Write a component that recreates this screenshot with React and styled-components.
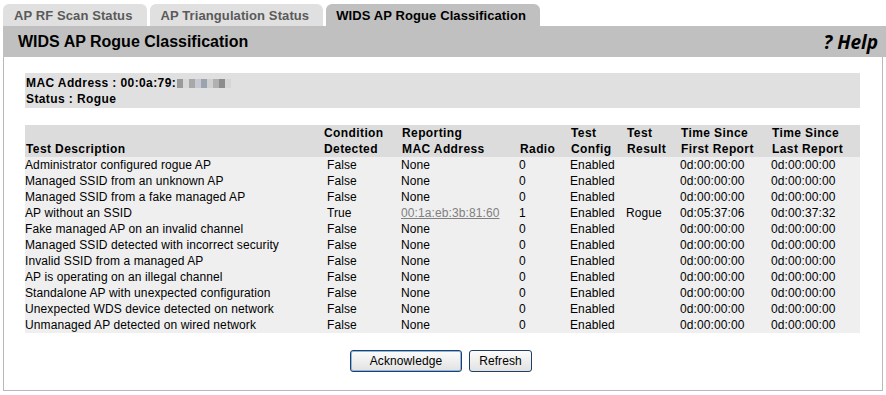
import styled, { createGlobalStyle } from "styled-components";

const GlobalStyle = createGlobalStyle`
  body {
    margin: 0;
    background: #fff;
    font-family: "Liberation Sans", Arial, sans-serif;
    font-size: 12px;
    color: #000;
  }
`;

const Page = styled.div`
  width: 886px;
  height: 395px;
  box-sizing: border-box;
  padding: 4px 0 0 3px;
`;

const TabBar = styled.div`
  display: flex;
  gap: 3px;
  height: 22px;
`;

const Tab = styled.div`
  display: flex;
  align-items: center;
  padding: 0 14px 0 ${(p) => (p.$active ? "10px" : "11px")};
  border-radius: 6px 6px 0 0;
  background: ${(p) => (p.$active ? "#c0c0c0" : "#e0e0e0")};
  color: ${(p) => (p.$active ? "#000" : "#5a5a5a")};
  font-weight: bold;
  font-size: 13px;
  letter-spacing: 0.1px;
`;

const TitleBar = styled.div`
  display: flex;
  justify-content: space-between;
  align-items: center;
  height: 31px;
  background: #c0c0c0;
  padding: 0 8px 0 15px;
`;

const Title = styled.h1`
  margin: 0;
  font-size: 16px;
  font-weight: bold;
`;

const Help = styled.span`
  font-family: "Open Sans", "DejaVu Sans", sans-serif;
  font-style: italic;
  font-weight: bold;
  font-size: 19px;
`;

const Panel = styled.div`
  width: 880px;
  box-sizing: border-box;
  border: 1px solid #b8b8b8;
  border-top: none;
  padding: 16px 22px 18px 21px;
`;

const InfoBox = styled.div`
  background: #e0e0e0;
  padding: 2px 1px 0;
  height: 35px;
  box-sizing: border-box;
  font-weight: bold;
  letter-spacing: 0.4px;
  line-height: 16px;
`;

const Blurred = styled.span`
  display: inline-flex;
  vertical-align: -1px;
  margin-left: 1px;
  span {
    width: 6px;
    height: 9px;
  }
`;

const Table = styled.table`
  margin-top: 17px;
  width: 835px;
  border-collapse: collapse;
  table-layout: fixed;
  td, th {
    padding: 0 0 0 1px;
    text-align: left;
    white-space: nowrap;
    line-height: 16px;
  }
  thead tr {
    background: #dcdcdc;
  }
  thead th {
    vertical-align: bottom;
    line-height: 15.5px;
    height: 32px;
    letter-spacing: 0.4px;
  }
  tbody tr {
    background: #efefef;
  }
  tbody td {
    letter-spacing: 0.1px;
  }
`;

const Cell = styled.td`
  padding-left: ${(p) => (p.$indent ? "4px" : "0")} !important;
`;

const Mac = styled.a`
  color: #808080;
  text-decoration: underline;
`;

const Buttons = styled.div`
  display: flex;
  justify-content: center;
  gap: 7px;
  margin-top: 17px;
  padding-right: 3px;
`;

const Button = styled.button`
  font-family: "Liberation Sans", Arial, sans-serif;
  font-size: 12px;
  letter-spacing: 0.1px;
  height: 22px;
  padding: 0 ${(p) => (p.$wide ? "17px" : "9px")};
  min-width: ${(p) => (p.$wide ? "112px" : "63px")};
  background: linear-gradient(#fbfbfb, #ececec 60%, #e2e2e2);
  border: 1px solid #1f3f66;
  border-radius: 3px;
  box-shadow: ${(p) => (p.$wide ? "inset 0 0 0 1px #8cb6e4" : "none")};
  color: #000;
`;

const rows = [
  ["Administrator configured rogue AP", "False", "None", "0", "Enabled", "", "0d:00:00:00", "0d:00:00:00"],
  ["Managed SSID from an unknown AP", "False", "None", "0", "Enabled", "", "0d:00:00:00", "0d:00:00:00"],
  ["Managed SSID from a fake managed AP", "False", "None", "0", "Enabled", "", "0d:00:00:00", "0d:00:00:00"],
  ["AP without an SSID", "True", "00:1a:eb:3b:81:60", "1", "Enabled", "Rogue", "0d:05:37:06", "0d:00:37:32"],
  ["Fake managed AP on an invalid channel", "False", "None", "0", "Enabled", "", "0d:00:00:00", "0d:00:00:00"],
  ["Managed SSID detected with incorrect security", "False", "None", "0", "Enabled", "", "0d:00:00:00", "0d:00:00:00"],
  ["Invalid SSID from a managed AP", "False", "None", "0", "Enabled", "", "0d:00:00:00", "0d:00:00:00"],
  ["AP is operating on an illegal channel", "False", "None", "0", "Enabled", "", "0d:00:00:00", "0d:00:00:00"],
  ["Standalone AP with unexpected configuration", "False", "None", "0", "Enabled", "", "0d:00:00:00", "0d:00:00:00"],
  ["Unexpected WDS device detected on network", "False", "None", "0", "Enabled", "", "0d:00:00:00", "0d:00:00:00"],
  ["Unmanaged AP detected on wired network", "False", "None", "0", "Enabled", "", "0d:00:00:00", "0d:00:00:00"],
];

const widths = [298, 78, 118, 51, 56, 54, 91, 89];
const blur = ["#9a9a9a", "#d8d8d8", "#a8a8a8", "#c8c8d0", "#9aa4b0", "#d0d0d0", "#b0b0b0", "#8c8c8c", "#d6d6d6"];

export default function App() {
  return (
    <Page>
      <GlobalStyle />
      <TabBar>
        <Tab>AP RF Scan Status</Tab>
        <Tab>AP Triangulation Status</Tab>
        <Tab $active>WIDS AP Rogue Classification</Tab>
      </TabBar>
      <TitleBar>
        <Title>WIDS AP Rogue Classification</Title>
        <Help>? Help</Help>
      </TitleBar>
      <Panel>
        <InfoBox>
          <div>
            MAC Address : 00:0a:79:
            <Blurred>
              {blur.map((c, i) => (
                <span key={i} style={{ background: c }} />
              ))}
            </Blurred>
          </div>
          <div>Status : Rogue</div>
        </InfoBox>
        <Table>
          <colgroup>
            {widths.map((w, i) => (
              <col key={i} style={{ width: w }} />
            ))}
          </colgroup>
          <thead>
            <tr>
              <th>Test Description</th>
              <th>Condition<br />Detected</th>
              <th>Reporting<br />MAC Address</th>
              <th>Radio</th>
              <th>Test<br />Config</th>
              <th>Test<br />Result</th>
              <th>Time Since<br />First Report</th>
              <th>Time Since<br />Last Report</th>
            </tr>
          </thead>
          <tbody>
            {rows.map((r) => (
              <tr key={r[0]}>
                <Cell>{r[0]}</Cell>
                <Cell $indent>{r[1]}</Cell>
                <Cell>{r[2] === "None" ? r[2] : <Mac href="#">{r[2]}</Mac>}</Cell>
                <Cell>{r[3]}</Cell>
                <Cell>{r[4]}</Cell>
                <Cell>{r[5]}</Cell>
                <Cell>{r[6]}</Cell>
                <Cell>{r[7]}</Cell>
              </tr>
            ))}
          </tbody>
        </Table>
        <Buttons>
          <Button $wide>Acknowledge</Button>
          <Button>Refresh</Button>
        </Buttons>
      </Panel>
    </Page>
  );
}
